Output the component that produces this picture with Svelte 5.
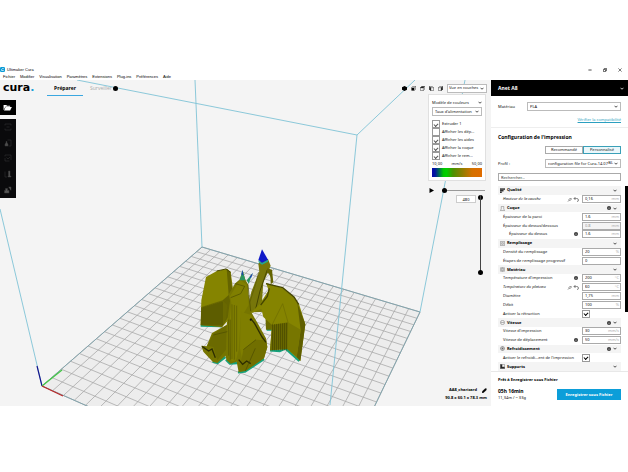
<script>
  const menus = ['Fichier', 'Modifier', 'Visualisation', 'Paramètres', 'Extensions', 'Plug-ins', 'Préférences', 'Aide'];
  const layers = [
    { id: 'ext', label: 'Extruder 1', on: true },
    { id: 'dep', label: 'Afficher les dép...', on: false },
    { id: 'aid', label: 'Afficher les aides', on: true },
    { id: 'coq', label: 'Afficher la coque', on: true },
    { id: 'rem', label: 'Afficher le rem...', on: true }
  ];
  const rows = [
    { head: 'Qualité', icon: 'quality' },
    { label: 'Hauteur de la couche', value: '0,16', unit: 'mm', changed: true },
    { head: 'Coque', icon: 'shell', info: true },
    { label: 'Épaisseur de la paroi', value: '1.6', unit: 'mm' },
    { label: 'Épaisseur du dessus/dessous', value: '0.8', unit: 'mm', off: true },
    { label: 'Épaisseur du dessus', value: '1.6', unit: 'mm', info: true, sub: true },
    { head: 'Remplissage', icon: 'infill' },
    { label: 'Densité du remplissage', value: '20', unit: '%' },
    { label: 'Étapes de remplissage progressif', value: '0', unit: '' },
    { head: 'Matériau', icon: 'material' },
    { label: "Température d'impression", value: '200', unit: '°C', info: true },
    { label: 'Température du plateau', value: '60', unit: '°C', changed: true },
    { label: 'Diamètre', value: '1,75', unit: 'mm' },
    { label: 'Débit', value: '100', unit: '%' },
    { label: 'Activer la rétraction', check: true },
    { head: 'Vitesse', icon: 'speed', info: true },
    { label: "Vitesse d'impression", value: '30', unit: 'mm/s' },
    { label: 'Vitesse de déplacement', value: '50', unit: 'mm/s', info: true },
    { head: 'Refroidissement', icon: 'cooling', info: true },
    { label: "Activer le refroidi...ent de l'impression", check: true },
    { head: 'Supports', icon: 'support' }
  ];

  // Build plate corners on screen: origin, x axis end, far corner, y axis end
  const p = [[42, 386], [324, 511], [420, 312], [202, 247]];
  const dx1 = p[1][0] - p[2][0], dx2 = p[3][0] - p[2][0], sx = p[0][0] - p[1][0] + p[2][0] - p[3][0];
  const dy1 = p[1][1] - p[2][1], dy2 = p[3][1] - p[2][1], sy = p[0][1] - p[1][1] + p[2][1] - p[3][1];
  const det = dx1 * dy2 - dx2 * dy1;
  const g = (sx * dy2 - dx2 * sy) / det, h = (dx1 * sy - sx * dy1) / det;
  function project(u, v) {
    const w = g * u + h * v + 1;
    const x = ((p[1][0] - p[0][0] + g * p[1][0]) * u + (p[3][0] - p[0][0] + h * p[3][0]) * v + p[0][0]) / w;
    const y = ((p[1][1] - p[0][1] + g * p[1][1]) * u + (p[3][1] - p[0][1] + h * p[3][1]) * v + p[0][1]) / w;
    return x.toFixed(1) + ' ' + y.toFixed(1);
  }
  let grid = '';
  for (let i = 0; i <= 22; i++) {
    const t = i / 22;
    grid += `M${project(t, 0)}L${project(t, 1)}M${project(0, t)}L${project(1, t)}`;
  }
  const plate = p.map((c) => c.join(',')).join(' ');
  let leftStruts = '', rightStruts = '';
  for (let x = 66; x < 128; x += 6) leftStruts += `M${x} ${218 - (x - 66) * 0.3}V270`;
  for (let x = 278; x < 322; x += 6) rightStruts += `M${x} ${268 - (x - 278) * 0.1}V346`;
</script>

{#snippet chevron()}
  <svg class="chev" viewBox="0 0 8 5" aria-hidden="true"><path d="M1 1l3 3 3-3" fill="none" stroke="currentColor" stroke-width="1.6" /></svg>
{/snippet}

{#snippet info()}
  <svg class="info" viewBox="0 0 10 10" aria-hidden="true"><circle cx="5" cy="5" r="5" fill="#333" /><path d="M5 2v1.4M5 4.3V8" stroke="#fff" stroke-width="1.4" /></svg>
{/snippet}

<div class="app">
  <header class="titlebar">
    <svg class="appicon" viewBox="0 0 12 12" aria-hidden="true"><rect width="12" height="12" rx="3" fill="#0a9bd6" /><path d="M9 3.8H5.5L3.8 5.5V8.4H9" fill="none" stroke="#fff" stroke-width="1.6" /></svg>
    <span>Ultimaker Cura</span>
    <div class="winctl">
      <button aria-label="Réduire"><svg viewBox="0 0 10 10"><path d="M1 5h8" stroke="#222" stroke-width="2" /></svg></button>
      <button aria-label="Restaurer"><svg viewBox="0 0 10 10"><path d="M1 3.5h5.5V9H1zM3.5 3.5V1H9v5.5H6.5" fill="none" stroke="#222" stroke-width="1.7" /></svg></button>
      <button aria-label="Fermer"><svg viewBox="0 0 10 10"><path d="M1 1l8 8M9 1L1 9" stroke="#222" stroke-width="1.5" /></svg></button>
    </div>
  </header>
  <nav class="menubar">
    {#each menus as m}<button>{m}</button>{/each}
  </nav>

  <main>
    <section class="stage">
      <svg class="scene" aria-label="Vue 3D du modèle">
        <g transform="translate(0 -80)">
          <polygon points={plate} fill="#ededed" />
          <path d={grid} stroke="#a9a9a9" stroke-width=".8" fill="none" />
          <polygon points={plate} fill="none" stroke="#83a4ad" />
          <path d="M195 80L202 247M465 80L420 312M0 209L42 386M77 80L357 135L415 80M357 135L330 405" fill="none" stroke="#7fc3d6" stroke-width=".9" />
          <path d="M42 386l-5-20" stroke="#14148c" stroke-width="1.2" />
          <path d="M42 386l20-16" stroke="#43c743" stroke-width="1.2" />
          <path d="M42 386l21 10" stroke="#bd2828" stroke-width="1.2" />
          <g transform="translate(180 235) scale(.33333)">
            <path d="M62 272l64 1M260 284h16M270 346l30 2 16-8 42 38M98 380l14 4 24-18M138 374l12 12 22-2M174 412l20-2 58-38" fill="none" stroke="#16a27c" stroke-width="7" stroke-linejoin="round" />
            <path d="M235 86L246 74L264 72L272 92L264 112L250 142L246 200L256 230L212 232L206 206L214 170L238 110Z" fill="#77760a" />
            <path d="M262 104L240 168L226 226" stroke="#454500" stroke-width="3" fill="none" />
            <path d="M236 112L226 150L210 200" stroke="#5a5900" stroke-width="2" fill="none" />
            <path d="M262 100L276 104L280 142L272 148Q274 116 260 112Z" fill="#656400" />
            <path d="M246 43L235 75L246 84L264 74Z" fill="#1019c8" />
            <path d="M235 76L246 84L264 74L264 80L246 89L236 82Z" fill="#21a696" />
            <path d="M78 126L112 107L142 102L152 110L160 170L180 180L160 240L126 276L62 270L64 196Z" fill="#858400" />
            <path d="M140 102L151 112L158 176L150 238L126 276L128 196L146 180Z" fill="#656400" />
            <path d="M110 108L138 102L152 112" stroke="#4a4900" stroke-width="3" fill="none" />
            <path d="M64 216L128 196L142 210L138 250L126 275L62 271Z" fill="#696800" />
            <path d={leftStruts} stroke="#3c3c00" stroke-width="1.5" />
            <path d="M256 236H276V284H258Z" fill="#6b6a00" />
            <path d="M258 144L306 158L342 186L358 210L376 268L361 378L322 342L270 346L276 270L250 246L244 222L210 236L240 206L266 166Z" fill="#858400" />
            <path d="M258 146L308 158L342 186L356 208M268 160L262 184L242 210" stroke="#454500" stroke-width="4" fill="none" />
            <path d="M352 204L376 268L361 378L350 366L362 286Z" fill="#5f5e00" />
            <path d="M276 270L324 262L322 342L270 346Z" fill="#6d6c00" />
            <path d="M324 262L362 284L350 366L322 342Z" fill="#777600" />
            <path d="M308 206L324 262M276 270L308 206" stroke="#6c6b00" stroke-width="2" fill="none" />
            <path d={rightStruts} stroke="#353500" stroke-width="1.7" />
            <path d="M188 107L179 134L166 145L146 178L150 198L140 270L96 294L80 334L64 332L70 350L98 380L112 384L136 362L140 376L152 386L170 380L176 412L196 408L252 370L262 336L258 310L236 270L214 232L206 180L204 148L196 134Z" fill="#767500" />
            <path d="M180 134L150 184L154 204L148 268L154 380L168 376L176 344L182 250L206 210L202 150Z" fill="#807f00" />
            <path d="M156 208V372M163 210V374M170 212V350M146 254V362M151 254V374" stroke="#4a4a00" stroke-width="1.4" />
            <path d="M182 230L214 240L248 318L240 340L186 372L180 340Z" fill="#7f7e00" />
            <path d="M190 344L228 314L258 316L262 336L252 370L196 408L178 408Z" fill="#716f00" />
            <path d="M140 270L100 296L82 332L100 336L112 376L138 344Z" fill="#6b6a00" />
            <path d="M212 250L224 266L246 306L258 322M176 374L188 388L200 378L212 386M66 334L86 348L96 342L106 368" stroke="#2d2d00" stroke-width="4" fill="none" />
            <path d="M196 408L226 340M190 344L228 314M204 148L212 228M100 300L142 290M166 146L194 154L182 176L152 188" stroke="#4c4b00" stroke-width="2" fill="none" />
            <path d="M188 106L179 136L196 136Z" fill="#2a9560" />
            <path d="M218 114L200 136L206 146Z" fill="#2a9560" />
            <path d="M187 104L184 118L190 122Z" fill="#1b43b2" />
            <path d="M219 113L209 125L213 130Z" fill="#1b43b2" />
            <circle cx="212" cy="254" r="3" fill="#111" />
          </g>
        </g>
      </svg>

      <div class="topbar">
        <div class="logo">cura<b>.</b></div>
        <button class="tab active">Préparer</button>
        <button class="tab">Surveiller</button>
        <span class="dot"></span>
        <div class="views">
          <button aria-label="Vue 3D"><svg viewBox="0 0 12 12"><path d="M6 0l6 3v6l-6 3-6-3V3z" /></svg></button>
          <button aria-label="Vue de face"><svg viewBox="0 0 12 12"><path d="M1 4h7v7H1z" /><path d="M1 4l3-3h7v7L8 11M8 4l3-3" fill="none" stroke="#111" /></svg></button>
          <button aria-label="Vue de dessus"><svg viewBox="0 0 12 12"><path d="M1 4l3-3h7L8 4z" stroke="#111" /><path d="M1 4h7v7H1zM11 1v7l-3 3" fill="none" stroke="#111" /></svg></button>
          <button aria-label="Vue gauche"><svg viewBox="0 0 12 12"><path d="M1 1l3 3v7L1 8z" stroke="#111" /><path d="M4 4h7v7H4zM1 1h7l3 3" fill="none" stroke="#111" /></svg></button>
          <button aria-label="Vue droite"><svg viewBox="0 0 12 12"><path d="M8 4l3-3v7l-3 3z" stroke="#111" /><path d="M1 4h7v7H1zM1 4l3-3h7" fill="none" stroke="#111" /></svg></button>
        </div>
        <div class="sel viewsel"><select aria-label="Type de vue"><option>Vue en couches</option></select>{@render chevron()}</div>
      </div>

      <div class="work">
        <div class="tools">
          <button class="open" aria-label="Ouvrir un fichier"><svg viewBox="0 0 20 16"><path d="M1 14V2h6l2 2h7v2H5z" fill="#fff" /><path d="M5.5 7H20l-4 8H2z" fill="#fff" /></svg></button>
          <div class="group">
            <button aria-label="Déplacer"><svg viewBox="0 0 16 16"><path d="M2 5V2h12v3M2 11v3h12v-3M5 8h6" /></svg></button>
            <button aria-label="Échelle"><svg viewBox="0 0 16 16"><path d="M7 2h7v12H9" /><path d="M2 14v-4l2-2V5h2v3l2 2v4z" fill="#4c4c4c" /></svg></button>
            <button aria-label="Tourner"><svg viewBox="0 0 16 16"><path d="M2 5V2h12v10M2 8v6h9M5 7l3 3 4-4" /></svg></button>
            <button aria-label="Miroir"><svg viewBox="0 0 16 16"><path d="M2 3v11h4" /><path d="M9 2h3v10h2v2H8v-2h1z" fill="#555" /></svg></button>
            <button aria-label="Paramètres par modèle"><svg viewBox="0 0 16 16"><path d="M3 5h4v4h3v5H1V9h2zM9 2h5v7" fill="#555" /></svg></button>
          </div>
        </div>

        <div class="layerside">
          <div class="card">
            <div class="cardhead"><span>Modèle de couleurs</span>{@render chevron()}</div>
            <div class="sel"><select aria-label="Modèle de couleurs"><option>Taux d'alimentation</option></select>{@render chevron()}</div>
            <div class="checks">
              {#each layers as l}
                <label for={l.id}><input type="checkbox" id={l.id} checked={l.on} />{l.label}</label>
              {/each}
            </div>
            <div class="scale"><span>10,00</span><span>mm/s</span><span>50,00</span></div>
            <div class="gradient"></div>
          </div>
          <div class="play">
            <button aria-label="Lecture"><svg viewBox="0 0 10 10"><path d="M1 0l9 5-9 5z" fill="#000" /></svg></button>
            <input type="range" min="0" max="100" value="0" aria-label="Progression" />
          </div>
          <div class="layers">
            <input class="num" value="480" aria-label="Couche" />
            <div class="vert">
              <input type="range" min="0" max="480" value="480" aria-label="Couche supérieure" />
              <input type="range" min="0" max="480" value="0" aria-label="Couche inférieure" />
            </div>
          </div>
        </div>
      </div>

      <div class="job">
        <div>AA8_charizard <svg viewBox="0 0 12 12" aria-hidden="true"><path d="M0 12l1-4 7-7 3 3-7 7zM9 0l3 3" stroke="#000" /></svg></div>
        <div class="dims">90.8 x 60.1 x 78.3 mm</div>
      </div>
    </section>

    <aside>
      <button class="machine">Anet A8{@render chevron()}</button>
      <div class="matblock">
        <div class="field">
          <label for="mat">Matériau</label>
          <div class="sel matsel"><select id="mat"><option>PLA</option></select>{@render chevron()}</div>
        </div>
        <a href="#compat">Vérifier la compatibilité</a>
      </div>
      <div class="config">
        <h2>Configuration de l'impression</h2>
        <div class="modes"><button>Recommandé</button><button class="on">Personnalisé</button></div>
        <div class="field">
          <label for="profile">Profil :</label>
          <div class="sel profsel"><select id="profile"><option>configuration file for Cura-14.07</option></select><span class="star">BL</span>{@render chevron()}</div>
        </div>
        <input class="search" placeholder="Rechercher..." aria-label="Rechercher" />
      </div>
      <div class="listwrap">
        <div class="list">
          {#each rows as r, i}
            {#if r.head}
              <button class="row head">
                <svg class="cat" viewBox="0 0 12 12" aria-hidden="true">
                  {#if r.icon === 'quality'}<path d="M0 1h12v3H0zM0 5h8v3H0zM0 9h4v3H0z" fill="#222" />
                  {:else if r.icon === 'shell'}<path d="M3 1h6v6l2 4H1l2-4z" />
                  {:else if r.icon === 'infill'}<path d="M1 1h10v10H1zM4 4h4v4H4z" />
                  {:else if r.icon === 'material'}<path d="M1 1v10M11 1v10M4 1h4v10H4zM4 4h4M4 8h4" />
                  {:else if r.icon === 'speed'}<circle cx="6" cy="6" r="5" /><path d="M2 6h8" />
                  {:else if r.icon === 'cooling'}<circle cx="6" cy="6" r="5" /><path d="M6 1v10M1 6h10M3 3l6 6M9 3l-6 6" />
                  {:else}<path d="M1 1h10v10H1z" /><path d="M1 1h4v6h6v4H1z" fill="#222" />{/if}
                </svg>
                <span class="name">{r.head}</span>
                {#if r.info}{@render info()}{/if}
                {@render chevron()}
              </button>
            {:else}
              <div class="row" class:sub={r.sub}>
                <label class="name" class:changed={r.changed} for={'s' + i}>{r.label}</label>
                {#if r.changed}
                  <svg class="act" viewBox="0 0 26 10" aria-hidden="true"><path d="M2 9l3-3M4 5l3-3 2 2-3 3zM14 3h5q4 0 4 3t-3 3M17 0l-3 3 3 3" fill="none" stroke="#555" stroke-width="1.4" /></svg>
                {/if}
                {#if r.info}{@render info()}{/if}
                <div class="val">
                  {#if r.check}<input type="checkbox" id={'s' + i} checked />
                  {:else}<div class="box" class:off={r.off}><input id={'s' + i} value={r.value} disabled={r.off} /><span>{r.unit}</span></div>{/if}
                </div>
              </div>
            {/if}
          {/each}
        </div>
        <div class="scroll"></div>
      </div>
      <footer>
        <strong>Prêt à Enregistrer sous Fichier</strong>
        <div class="save">
          <div><div class="time">05h 16min</div><div>11,34m / ~ 33g</div></div>
          <button>Enregistrer sous Fichier</button>
        </div>
      </footer>
    </aside>
  </main>
</div>

<style>
  :global(body) { margin: 0; background: #fff; }
  .app, .app * { box-sizing: border-box; }
  .app { min-height: 100vh; padding: 66px 0 66px; display: flex; flex-direction: column; font: 4px/6px "Noto Sans", "Open Sans", sans-serif; color: #111; }
  button, input, select { font: inherit; color: inherit; margin: 0; padding: 0; border: 0; background: none; border-radius: 0; outline: 0; min-width: 0; }
  button { display: block; white-space: nowrap; }
  svg { display: block; flex: none; }
  .titlebar { height: 7px; display: flex; align-items: center; gap: 2px; color: #000; font-family: "Liberation Sans", sans-serif; }
  .appicon { width: 5px; height: 5px; }
  .winctl { margin: 0 6px 0 auto; display: flex; gap: 11px; }
  .winctl svg { width: 4px; height: 4px; }
  .menubar { height: 7px; padding-left: 3px; display: flex; align-items: center; gap: 5px; color: #000; font-family: "Liberation Sans", sans-serif; }
  main { flex: 1; display: flex; min-height: 0; }
  .stage { flex: 1; min-width: 0; position: relative; background: #f4f4f4; display: flex; flex-direction: column; }
  .scene { position: absolute; inset: 0; width: 100%; height: 100%; overflow: hidden; }
  .topbar { position: relative; height: 16px; display: flex; align-items: center; padding-right: 4px; }
  .logo { width: 47px; padding-left: 3px; font: bold 11px/12px "DejaVu Sans", sans-serif; color: #000; }
  .logo b { color: #1a9fd8; }
  .tab { height: 16px; padding: 0 7px; color: #aaa; font: 5px/6px "Open Sans", sans-serif; }
  .tab.active { color: #000; font-weight: 700; border-bottom: 1px solid #3aa7e0; }
  .dot { width: 5px; height: 5px; border-radius: 50%; background: #000; margin-left: -6px; }
  .views { margin-left: auto; display: flex; gap: 4px; margin-right: 4px; }
  .views svg { width: 5px; height: 5px; }
  .sel { position: relative; display: flex; height: 9px; background: #fff; border: 1px solid #bbb; }
  .sel select { appearance: none; flex: 1; width: 100%; padding: 0 8px 0 2px; }
  .chev { width: 4px; height: 3px; color: #222; }
  .sel .chev { position: absolute; right: 2px; top: 2px; pointer-events: none; }
  .viewsel { width: 40px; }
  .sel.viewsel select { padding: 0 4px 0 1px; }
  .work { position: relative; flex: 1; display: flex; justify-content: space-between; }
  .tools { width: 16px; padding-top: 4px; display: flex; flex-direction: column; gap: 4px; }
  .open { height: 15px; background: #000; padding-left: 3px; }
  .open svg { width: 9px; height: 7px; }
  .group { background: #0a0a0c; height: 79px; display: flex; flex-direction: column; justify-content: space-around; padding-left: 4px; }
  .group svg { width: 8px; height: 8px; fill: none; stroke: #3b3b3b; }
  .layerside { width: 63px; }
  .card { width: 58px; height: 87px; padding: 4px 3px 2px 3px; background: #fff; border: 1px solid #e0e0e0; margin-top: -2px; }
  .cardhead { display: flex; justify-content: space-between; align-items: center; height: 7px; margin-bottom: 1px; }
  .card .sel select { padding-right: 4px; }
  .checks { margin-top: 4px; }
  .checks label { display: flex; align-items: center; gap: 2px; height: 8px; white-space: nowrap; }
  input[type='checkbox'] { appearance: none; flex: none; width: 8px; height: 8px; border: 1px solid #999; background: #fff; display: grid; place-items: center; }
  input[type='checkbox']:checked::before { content: ''; width: 3px; height: 2px; border: solid #555; border-width: 0 0 1px 1px; transform: rotate(-45deg); }
  .scale { display: flex; justify-content: space-between; margin-top: 1px; height: 7px; }
  .gradient { height: 9px; background: linear-gradient(90deg, #0808a8, #0016a0 6%, #00c800 23%, #00d000 29%, #4a9000 42%, #858000 58%, #d47100 80%, #e06c00); }
  .play { display: flex; align-items: center; height: 18px; padding-left: 1px; gap: 8px; }
  .play svg { width: 5px; height: 5px; }
  input[type='range'] { appearance: none; background: linear-gradient(#999, #999) center / 100% 1px no-repeat; }
  input[type='range']::-webkit-slider-thumb { appearance: none; width: 5px; height: 5px; border-radius: 50%; background: #000; pointer-events: auto; }
  .play input { width: 43px; height: 5px; }
  .layers { display: flex; gap: 2px; padding-left: 28px; margin-top: -4px; }
  .num { width: 20px; height: 8px; text-align: center; background: #fff; border: 1px solid #ccc; }
  .vert { display: grid; }
  .vert input { grid-area: 1 / 1; writing-mode: vertical-lr; direction: rtl; width: 5px; height: 80px; background: linear-gradient(#444, #444) center / 1px 100% no-repeat; pointer-events: none; }
  .job { position: relative; padding: 0 4px 4px; font-weight: 700; text-align: right; color: #000; }
  .job div { display: flex; justify-content: flex-end; align-items: center; gap: 5px; height: 8px; }
  .job .dims { font-family: "Open Sans", sans-serif; }
  .job svg { width: 5px; height: 5px; }
  aside { width: 137px; background: #fff; display: flex; flex-direction: column; }
  .machine { height: 16px; background: #000; color: #fff; font-weight: 700; font-size: 5px; text-align: left; padding: 0 4px 0 7px; display: flex; align-items: center; justify-content: space-between; }
  .machine .chev { color: #fff; }
  .matblock { padding: 6px 7px 0; height: 32px; border-bottom: 1px solid #eee; display: flex; flex-direction: column; gap: 6px; }
  .matblock a { color: #2a9fc0; text-decoration: underline; align-self: flex-end; }
  .field { display: flex; align-items: center; justify-content: space-between; }
  .matsel { width: 94px; }
  .profsel { width: 76px; }
  .sel.profsel select { padding-right: 4px; }
  .star { position: absolute; right: 7px; }
  .config { padding: 6px 7px 5px; display: flex; flex-direction: column; }
  h2 { margin: 0 0 5px; font: bold 5px/7px "Open Sans", sans-serif; color: #000; }
  .modes { align-self: flex-end; display: flex; width: 76px; margin-bottom: 5px; }
  .modes button { flex: 1; height: 8px; border: 1px solid #aaa; text-align: center; line-height: 6px; }
  .modes .on { border-color: #3aa0b8; background: #eaf7fb; }
  .search { height: 8px; border: 1px solid #aaa; padding: 0 2px; margin-top: 5px; }
  .search::placeholder { color: #333; opacity: 1; }
  .listwrap { flex: 1; min-height: 0; display: flex; justify-content: space-between; padding-left: 7px; }
  .list { width: 123px; display: grid; grid-auto-rows: minmax(0, 1fr); }
  .row { display: flex; align-items: center; gap: 2px; padding-left: 5px; min-height: 0; text-align: left; }
  .head { width: 100%; background: #f4f4f4; padding: 0 4px 0 2px; gap: 2px; font-weight: 700; color: #000; }
  .name { flex: 1; white-space: nowrap; }
  .sub { padding-left: 11px; }
  .changed { font-style: italic; }
  .cat { width: 5px; height: 5px; fill: none; stroke: #555; }
  .info { width: 4px; height: 4px; }
  .row:not(.head) .info { margin-right: 2px; }
  .act { width: 13px; height: 5px; }
  .val { width: 39px; }
  .val input[type='checkbox']::before { border-color: #000; }
  .box { height: 8px; border: 1px solid #aaa; display: flex; align-items: center; padding: 0 1px 0 2px; }
  .box input { flex: 1; width: 100%; height: 6px; }
  .box span { color: #aaa; }
  .off { background: #f4f4f4; color: #999; }
  .scroll { width: 3px; height: 68%; background: #000; }
  footer { border-top: 1px solid #e8e8e8; height: 35px; padding: 5px 7px 5px; display: flex; flex-direction: column; justify-content: space-between; }
  footer strong { color: #000; }
  .save { display: flex; justify-content: space-between; align-items: center; }
  .time { font-size: 5px; line-height: 7px; font-weight: 700; color: #000; }
  .save button { width: 64px; height: 11px; background: #0c9ed9; color: #fff; font-weight: 700; text-align: center; }
</style>
